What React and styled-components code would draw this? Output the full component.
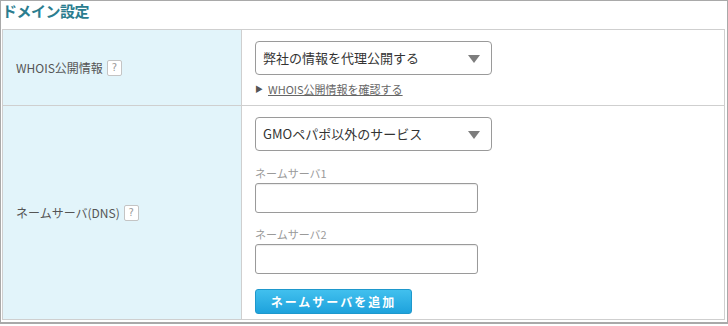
import React from 'react';
import styled, { createGlobalStyle } from 'styled-components';

const GlobalStyle = createGlobalStyle`
  body {
    margin: 0;
    background: #fff;
    font-family: "Noto Sans CJK JP", "Noto Sans", sans-serif;
  }
`;

const Frame = styled.div`
  width: 728px;
  height: 324px;
  box-sizing: border-box;
  border: 1px solid #a9a9a9;
  border-bottom-width: 2px;
  padding: 0 2px 0 1px;
  overflow: hidden;
`;

const Title = styled.h2`
  margin: 0;
  height: 28px;
  font-size: 15px;
  line-height: 20px;
  font-weight: bold;
  color: #2b7d8f;
  letter-spacing: -0.5px;
`;

const Table = styled.div`
  display: grid;
  grid-template-columns: 239px 1fr;
  border: 1px solid #cfcfcf;
  line-height: 14px;
`;

const Label = styled.div`
  display: flex;
  align-items: center;
  gap: 4px;
  padding-left: 13px;
  background: #e2f4fa;
  border-right: 1px solid #cfcfcf;
  border-top: ${p => (p.first ? 'none' : '1px solid #cfcfcf')};
  font-size: 12px;
  color: #555;
`;

const Help = styled.span`
  display: inline-flex;
  align-items: center;
  justify-content: center;
  width: 13px;
  height: 14px;
  border: 1px solid #c4c4c4;
  border-radius: 2px;
  background: #fff;
  font-size: 10px;
  color: #999;
  font-family: "DejaVu Sans", sans-serif;
`;

const Value = styled.div`
  display: flex;
  flex-direction: column;
  align-items: flex-start;
  padding: 11px 13px ${p => p.bottom}px;
  border-top: ${p => (p.first ? 'none' : '1px solid #cfcfcf')};
`;

const Select = styled.div`
  position: relative;
  width: 237px;
  height: 34px;
  box-sizing: border-box;
  border: 1px solid #9a9a9a;
  border-radius: 4px;
  padding-left: 7px;
  display: flex;
  align-items: center;
  font-size: 13px;
  color: #333;
  background: #fff;

  &::after {
    content: '';
    position: absolute;
    right: 11px;
    top: 13px;
    border-left: 6px solid transparent;
    border-right: 6px solid transparent;
    border-top: 8px solid #7d7d7d;
  }
`;

const LinkLine = styled.div`
  margin-top: 7px;
  height: 14px;
  font-size: 11px;
  color: #666;
  display: flex;
  align-items: center;
  gap: 5px;

  a {
    color: #666;
    text-decoration: underline;
  }
`;

const Arrow = styled.span`
  font-size: 8px;
  color: #555;
`;

const FieldLabel = styled.div`
  margin-top: ${p => p.top}px;
  height: 14px;
  font-size: 11px;
  color: #9a9a9a;
`;

const Input = styled.div`
  margin-top: 3px;
  width: 223px;
  height: 30px;
  box-sizing: border-box;
  border: 1px solid #9a9a9a;
  border-radius: 3px;
  box-shadow: inset 0 1px 1px rgba(0, 0, 0, 0.08);
  background: #fff;
`;

const Button = styled.button`
  margin-top: 15px;
  width: 157px;
  height: 25px;
  border: 1px solid #1e98cc;
  border-radius: 3px;
  background: linear-gradient(#41c0ee, #1ea2dc);
  color: #fff;
  font-family: inherit;
  font-size: 12px;
  line-height: 14px;
  font-weight: bold;
  letter-spacing: 2px;
  padding: 0;
`;

export default function App() {
  return (
    <>
      <GlobalStyle />
      <Frame>
        <Title>ドメイン設定</Title>
        <Table>
          <Label first>
            WHOIS公開情報 <Help>?</Help>
          </Label>
          <Value first bottom={9}>
            <Select>弊社の情報を代理公開する</Select>
            <LinkLine>
              <Arrow>▶</Arrow>
              <a>WHOIS公開情報を確認する</a>
            </LinkLine>
          </Value>
          <Label>
            ネームサーバ(DNS) <Help>?</Help>
          </Label>
          <Value bottom={5}>
            <Select>GMOペパポ以外のサービス</Select>
            <FieldLabel top={15}>ネームサーバ1</FieldLabel>
            <Input />
            <FieldLabel top={14}>ネームサーバ2</FieldLabel>
            <Input />
            <Button>ネームサーバを追加</Button>
          </Value>
        </Table>
      </Frame>
    </>
  );
}
